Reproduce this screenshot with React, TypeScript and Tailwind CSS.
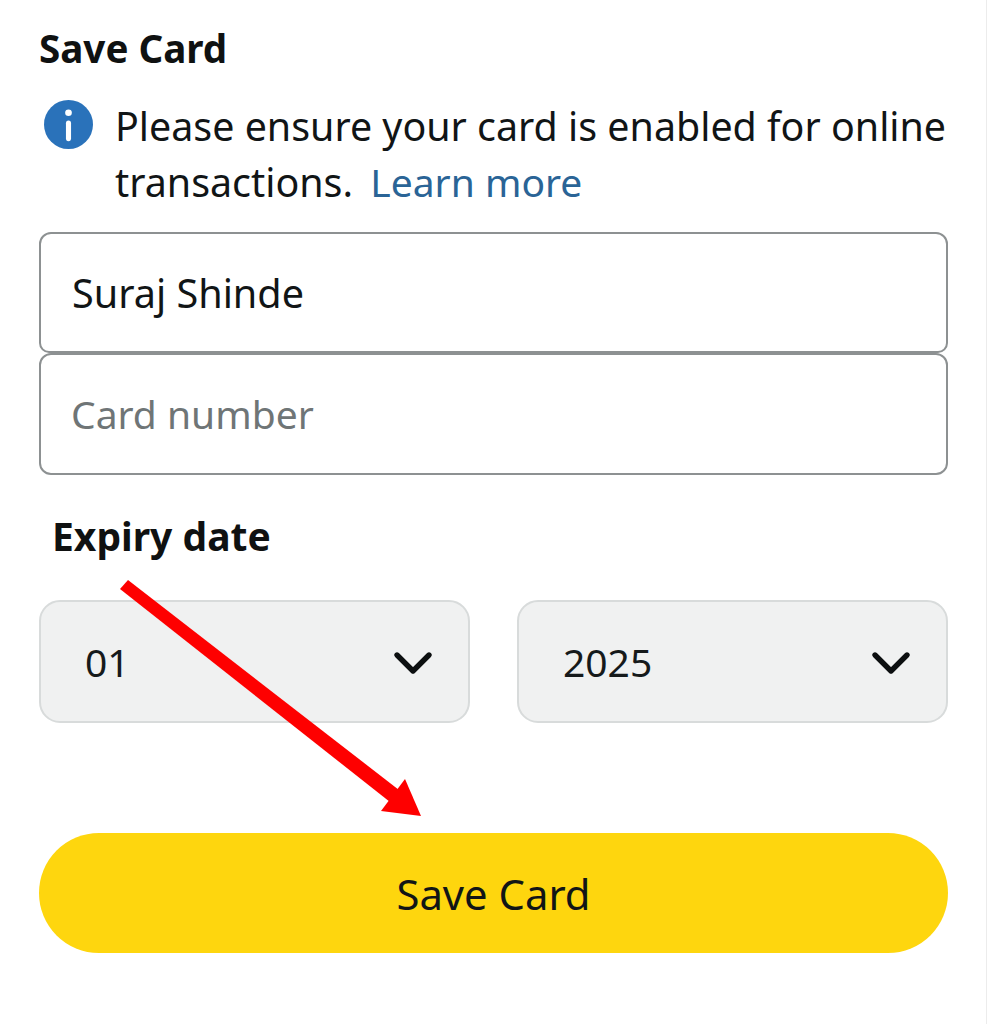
import { ChevronDown } from 'lucide-react';

// Amazon "Save Card" form, with the red annotation arrow on top.

function InfoIcon() {
  return (
    <svg viewBox="0 0 50 50" className="mt-[2px] h-[49px] w-[49px] shrink-0">
      <circle cx="25" cy="25" r="25" fill="#2a72ba" />
      <circle cx="25" cy="13" r="3.4" fill="#ffffff" />
      <rect x="22.4" y="21" width="5.2" height="21" rx="2.6" fill="#ffffff" />
    </svg>
  );
}

function SelectBox({ value }: { value: string }) {
  return (
    <div className="flex h-[123px] flex-1 items-center justify-between rounded-[21px] border-2 border-[#d8dbdb] bg-[#f0f1f1] pl-[44px] pr-[23px]">
      <span className="text-[39px] leading-none text-[#161a1b]">{value}</span>
      <ChevronDown size={64} strokeWidth={2} className="mt-[3px] text-[#0c0f10]" />
    </div>
  );
}

export default function App() {
  return (
    <div
      className="relative h-[1024px] w-[987px] overflow-hidden bg-white pl-[39px] pr-[39px] pt-[23px] text-[#0f1111]"
      style={{ fontFamily: '"Noto Sans", sans-serif' }}
    >
      <h1 className="text-[38.6px] font-bold leading-[50px]">Save Card</h1>

      <div className="mt-[25px] flex gap-[22px] pl-[5px]">
        <InfoIcon />
        <p className="w-[840px] text-[39.4px] leading-[56px] text-[#111516]">
          Please ensure your card is enabled for online transactions.{' '}
          <span className="ml-[7px] text-[39px] text-[#2a6496]">Learn more</span>
        </p>
      </div>

      <div className="mt-[22px] flex h-[121px] items-center rounded-t-[12px] rounded-b-[10px] border-[2.5px] border-[#8d9192] pl-[31px] pt-[2px] text-[39.6px] text-[#111516]">
        Suraj Shinde
      </div>
      <div className="flex h-[122px] items-center rounded-[12px] border-[2.5px] border-[#8d9192] pl-[30px] text-[39px] text-[#6f7576]">
        Card number
      </div>

      <h2 className="mt-[36px] pl-[13px] text-[39px] font-bold leading-[50px]">Expiry date</h2>

      <div className="mt-[39px] flex gap-[47px]">
        <SelectBox value="01" />
        <SelectBox value="2025" />
      </div>

      <button
        type="button"
        className="mt-[110px] flex h-[120px] w-full items-center justify-center rounded-full bg-[#fed60e] pt-[2px] text-[41.8px] text-[#111516]"
      >
        Save Card
      </button>

      {/* annotation arrow */}
      <svg viewBox="0 0 987 1024" className="pointer-events-none absolute left-0 top-0 h-[1024px] w-[987px]">
        <polygon points="128,580 120,589 390,802 399,790" fill="#fe0000" />
        <polygon points="405,779 381,811 421,816" fill="#fe0000" />
      </svg>

      <div className="absolute right-0 top-0 h-full w-px bg-[#ececec]" />
    </div>
  );
}
